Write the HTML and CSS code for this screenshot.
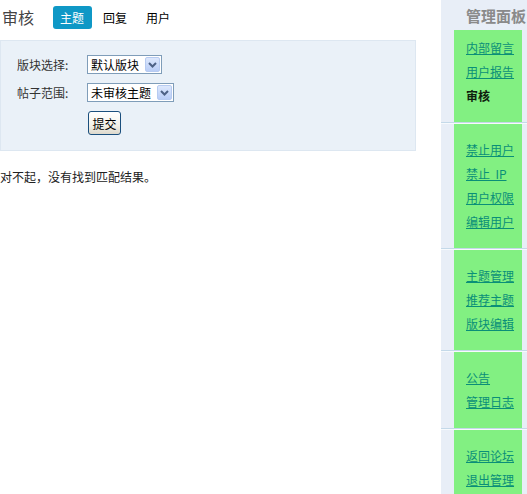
FILE: index.html
```html
<!DOCTYPE html>
<html lang="zh-CN">
<head>
<meta charset="utf-8">
<title>审核</title>
<link rel="stylesheet" href="styles.css">
</head>
<body>
<div class="page">
  <main class="main">
    <div class="head">
      <h1 class="title">审核</h1>
      <nav class="tabs">
        <a class="tab tab-on" href="#">主题</a>
        <a class="tab" href="#">回复</a>
        <a class="tab" href="#">用户</a>
      </nav>
    </div>
    <form class="filter">
      <div class="row">
        <label class="lbl">版块选择:</label>
        <span class="sel"><span class="sel-text">默认版块</span><span class="sel-btn"><svg width="9" height="6" viewBox="0 0 9 6"><path d="M1 1 L4.5 4.5 L8 1" fill="none" stroke="#4d6185" stroke-width="2"/></svg></span></span>
      </div>
      <div class="row">
        <label class="lbl">帖子范围:</label>
        <span class="sel"><span class="sel-text">未审核主题</span><span class="sel-btn"><svg width="9" height="6" viewBox="0 0 9 6"><path d="M1 1 L4.5 4.5 L8 1" fill="none" stroke="#4d6185" stroke-width="2"/></svg></span></span>
      </div>
      <div class="row row-btn">
        <button class="submit" type="button">提交</button>
      </div>
    </form>
    <p class="msg">对不起，没有找到匹配结果。</p>
  </main>
  <aside class="side">
    <div class="side-title">管理面板</div>
    <div class="menu">
      <ul class="grp grp-first">
        <li><a href="#">内部留言</a></li>
        <li><a href="#">用户报告</a></li>
        <li><b class="cur">审核</b></li>
      </ul>
      <ul class="grp">
        <li><a href="#">禁止用户</a></li>
        <li><a href="#">禁止&nbsp; IP</a></li>
        <li><a href="#">用户权限</a></li>
        <li><a href="#">编辑用户</a></li>
      </ul>
      <ul class="grp">
        <li><a href="#">主题管理</a></li>
        <li><a href="#">推荐主题</a></li>
        <li><a href="#">版块编辑</a></li>
      </ul>
      <ul class="grp">
        <li><a href="#">公告</a></li>
        <li><a href="#">管理日志</a></li>
      </ul>
      <ul class="grp">
        <li><a href="#">返回论坛</a></li>
        <li><a href="#">退出管理</a></li>
      </ul>
    </div>
  </aside>
</div>
</body>
</html>
```

FILE: styles.css
```css
* { box-sizing: border-box; }
html, body {
  margin: 0;
  padding: 0;
  background: #fff;
  font-family: "Noto Sans CJK SC", "Noto Sans", "Liberation Sans", sans-serif;
  font-size: 12px;
  color: #222;
  overflow: hidden;
}
.page {
  display: flex;
  gap: 25px;
  width: 527px;
  height: 494px;
}
.main {
  width: 416px;
  flex: none;
}
.head {
  display: flex;
  align-items: center;
  padding-top: 6px;
  height: 29px;
  margin-bottom: 11px;
}
.title {
  margin: 0 0 0 2px;
  font-size: 16px;
  font-weight: normal;
  line-height: 23px;
  color: #444;
  width: 51px;
}
.tabs {
  display: flex;
  gap: 4px;
}
.tab {
  display: block;
  height: 23px;
  line-height: 23px;
  padding: 0 8px 0 7px;
  color: #000;
  text-decoration: none;
  border-radius: 3px;
}
.tab-on {
  background: #0f98c6;
  color: #fff;
}
.filter {
  background: #eaf1f8;
  border: 1px solid #dde7f1;
  padding: 14px 0 15px 16px;
  display: flex;
  flex-direction: column;
  gap: 9px;
}
.row {
  display: flex;
  align-items: center;
  height: 19px;
}
.row-btn {
  height: 24px;
  padding-left: 71px;
}
.lbl {
  width: 70px;
  color: #333;
  line-height: 19px;
}
.sel {
  display: inline-flex;
  align-items: center;
  height: 19px;
  border: 1px solid #7f9db9;
  background: #fff;
  padding: 0 1px 0 3px;
  gap: 6px;
  color: #000;
}
.sel-text { line-height: 17px; }
.sel-btn {
  width: 15px;
  height: 15px;
  display: flex;
  align-items: center;
  justify-content: center;
  border: 1px solid #b7cbf1;
  border-radius: 2px;
  background: linear-gradient(#dde8fd, #b9cdf6);
}
.submit {
  height: 24px;
  width: 33px;
  padding: 0;
  font-family: inherit;
  font-size: 12px;
  color: #000;
  border: 1px solid #1b4f7d;
  border-radius: 3px;
  background: linear-gradient(#ffffff, #f4f2ea 60%, #dcd8cc);
}
.msg {
  margin: 19px 0 0;
  line-height: 14px;
  color: #222;
}
.side {
  width: 86px;
  flex: none;
  background: #e8eef7;
  height: 494px;
}
.side-title {
  height: 30px;
  line-height: 32px;
  padding-left: 25px;
  font-size: 15px;
  font-weight: bold;
  color: #8a8a8a;
  white-space: nowrap;
  overflow: hidden;
}
.menu {
  background: linear-gradient(to right, #e8eef7 13px, #82f082 13px, #82f082 81px, #e8eef7 81px);
  height: 464px;
}
.grp {
  list-style: none;
  margin: 0;
  padding: 15px 0 14px 25px;
  border-bottom: 1px solid #c4d9e9;
  box-shadow: 0 1px 0 #f7fafd;
}
.grp-first { padding-top: 6px; }
.grp li {
  height: 24px;
  line-height: 24px;
  white-space: nowrap;
}
.grp a {
  color: #0a8f78;
  text-decoration: underline;
}
.cur {
  color: #0f1f0f;
  font-weight: bold;
}
```
